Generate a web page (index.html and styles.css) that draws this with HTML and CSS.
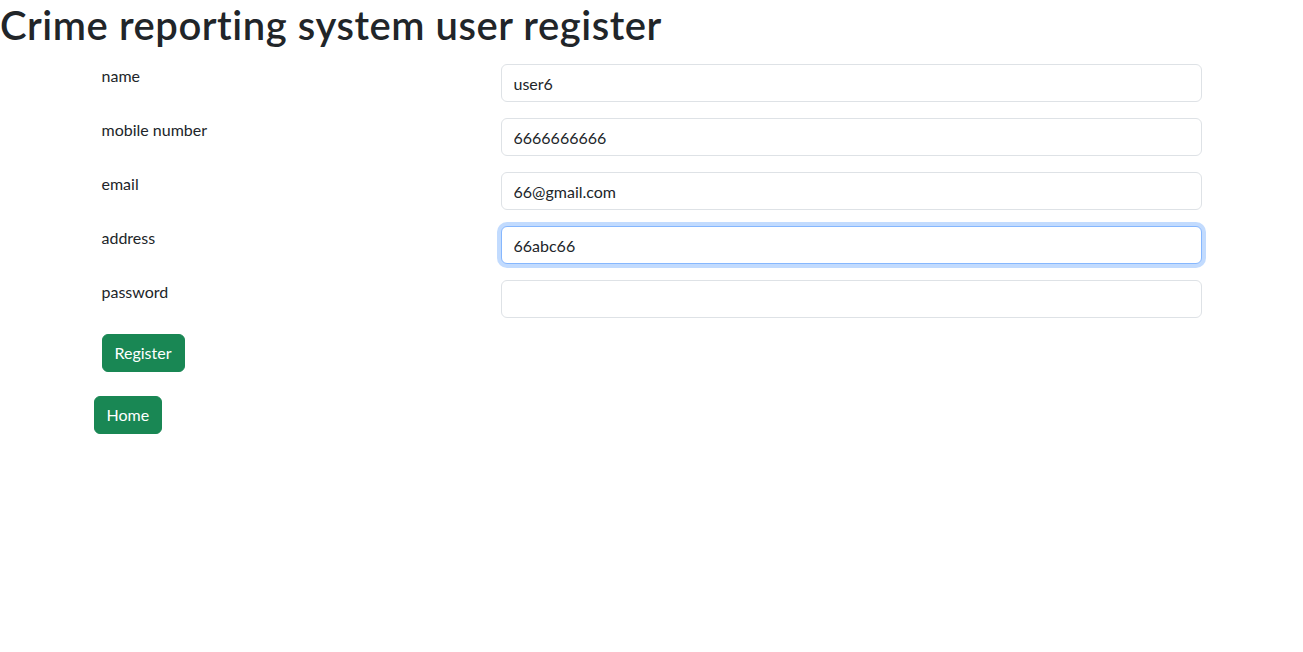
FILE: index.html
```html
<!DOCTYPE html>
<html lang="en">
<head>
<meta charset="utf-8">
<title>Crime reporting system user register</title>
<link rel="stylesheet" href="styles.css">
</head>
<body>
<h1 class="title">Crime reporting system user register</h1>
<div class="container">
  <form class="reg-form">
    <table class="form-table">
      <colgroup><col class="col-label"><col></colgroup>
      <tbody>
        <tr><td>name</td><td><input class="form-control" type="text" value="user6"></td></tr>
        <tr><td>mobile number</td><td><input class="form-control" type="text" value="6666666666"></td></tr>
        <tr><td>email</td><td><input class="form-control" type="text" value="66@gmail.com"></td></tr>
        <tr><td>address</td><td><input class="form-control focused" type="text" value="66abc66"></td></tr>
        <tr><td>password</td><td><input class="form-control" type="password" value=""></td></tr>
        <tr><td><button type="button" class="btn">Register</button></td><td></td></tr>
      </tbody>
    </table>
  </form>
  <a class="btn" href="#">Home</a>
</div>
</body>
</html>
```
FILE: styles.css
```css
* { box-sizing: border-box; }
body {
  margin: 0;
  font-family: Lato, "Noto Sans", sans-serif;
  font-size: 16px;
  line-height: 1.5;
  color: #212529;
  background: #fff;
  font-variant-ligatures: none;
}
.title {
  margin: 0 0 8px;
  font-size: 40px;
  font-weight: 600;
  line-height: 1.25;
  height: 48px;
  letter-spacing: 0.55px;
}
.container {
  max-width: 1140px;
  margin: 0 auto;
  padding: 0 12px;
}
.form-table {
  width: 100%;
  border-collapse: collapse;
  margin-bottom: 16px;
}
.col-label { width: 399px; }
.form-table td {
  padding: 8px;
  vertical-align: top;
}
.form-control {
  display: block;
  width: 100%;
  height: 38px;
  padding: 6px 12px;
  font: inherit;
  color: #212529;
  background: #fff;
  border: 1px solid #dee2e6;
  border-radius: 6px;
  outline: none;
}
.form-control.focused {
  border-color: #86b7fe;
  box-shadow: 0 0 0 4px rgba(13, 110, 253, 0.25);
}
.btn {
  display: inline-block;
  padding: 6px 12px;
  font: inherit;
  line-height: 1.5;
  color: #fff;
  background: #198754;
  border: 1px solid #198754;
  border-radius: 6px;
  text-decoration: none;
  cursor: pointer;
}
```
